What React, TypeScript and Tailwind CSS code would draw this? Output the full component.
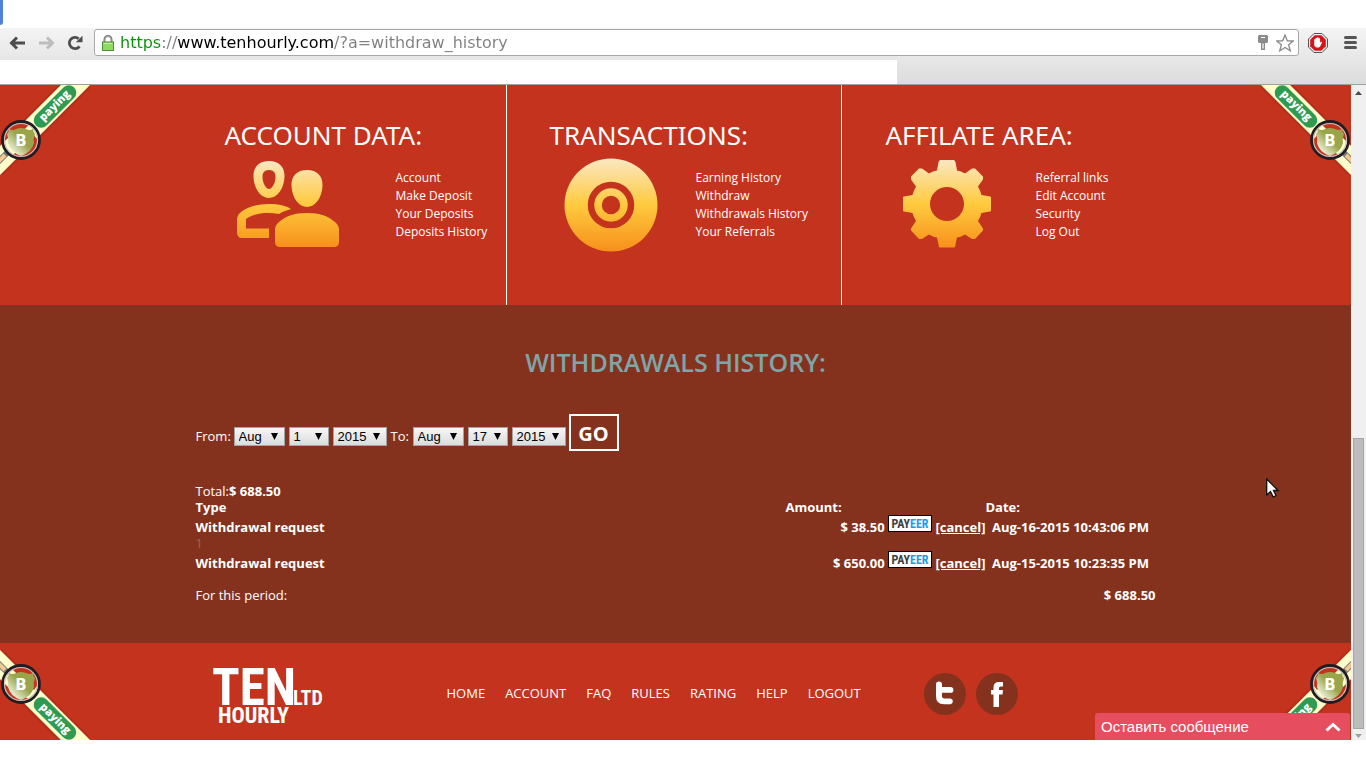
import { useState } from "react";

interface Withdrawal {
  amount: string;
  date: string;
  note?: string;
}

interface MenuColumn {
  title: string;
  links: string[];
}

const ACCOUNT: MenuColumn = {
  title: "ACCOUNT DATA:",
  links: ["Account", "Make Deposit", "Your Deposits", "Deposits History"],
};

const TRANSACTIONS: MenuColumn = {
  title: "TRANSACTIONS:",
  links: ["Earning History", "Withdraw", "Withdrawals History", "Your Referrals"],
};

const AFFILIATE: MenuColumn = {
  title: "AFFILATE AREA:",
  links: ["Referral links", "Edit Account", "Security", "Log Out"],
};

const WITHDRAWALS: Withdrawal[] = [
  { amount: "$ 38.50", date: "Aug-16-2015 10:43:06 PM", note: "1" },
  { amount: "$ 650.00", date: "Aug-15-2015 10:23:35 PM" },
];

const FOOTER_LINKS = ["HOME", "ACCOUNT", "FAQ", "RULES", "RATING", "HELP", "LOGOUT"];
const MONTHS = ["Jan", "Feb", "Mar", "Apr", "May", "Jun", "Jul", "Aug", "Sep", "Oct", "Nov", "Dec"];
const DAYS = Array.from({ length: 31 }, (_, i) => String(i + 1));
const YEARS = ["2014", "2015", "2016"];

function BrowserBar() {
  const [url, setUrl] = useState("https://www.tenhourly.com/?a=withdraw_history");

  return (
    <header className="shrink-0">
      <div className="h-7 bg-white">
        <div className="h-[25px] w-[3px] rounded-br-sm bg-[#4f83d8]" />
      </div>
      <div className="border-b border-[#a0a0a0] bg-linear-to-b from-[#f4f4f4] to-[#dcdcdc]">
        <div className="flex h-8 items-start pt-px">
          <div className="flex h-[27px] w-[94px] shrink-0 items-center gap-3 pl-[9px]">
            <button type="button" aria-label="Back" className="text-[#4d4d4d]">
              <svg width="17" height="16" viewBox="0 0 17 16" fill="none" stroke="currentColor" strokeWidth="3">
                <path d="M8 2.500 2.500 8 8 13.500M2.500 8H16" />
              </svg>
            </button>
            <button type="button" aria-label="Forward" className="text-[#bdbdbd]">
              <svg width="17" height="16" viewBox="0 0 17 16" fill="none" stroke="currentColor" strokeWidth="3">
                <path d="M9 2.500 14.500 8 9 13.500M14.500 8H1" />
              </svg>
            </button>
            <button type="button" aria-label="Reload" className="text-[#4d4d4d]">
              <svg width="16" height="16" viewBox="0 0 16 16">
                <path d="M12.500 11.300A5.600 5.600 0 1 1 11.700 3.800" fill="none" stroke="currentColor" strokeWidth="2.800" />
                <path d="M15.500.8V7.200H8.800Z" fill="currentColor" />
              </svg>
            </button>
          </div>
          <div className="flex h-[27px] grow items-center rounded-[3px] border border-[#a8a8a8] bg-white pr-1 pl-[7px]">
            <svg width="12" height="16" viewBox="0 0 12 16" className="shrink-0">
              <path d="M2.500 8V4.500a3.500 3.500 0 0 1 7 0V8" fill="none" stroke="#777" strokeWidth="2" />
              <path d="M3 8V4.500a3 3 0 0 1 6 0V8" fill="none" stroke="#ccc" strokeWidth=".7" />
              <rect x=".5" y="7" width="11" height="8.500" fill="#8edb62" stroke="#4c8f35" />
              <path d="M1.500 8.500h9" stroke="#c4f1a5" />
            </svg>
            <input
              type="text"
              aria-label="Address"
              value={url}
              onChange={(e) => setUrl(e.target.value)}
              className="ml-[6px] h-6 min-w-0 grow bg-[linear-gradient(90deg,#0a8f0a_42px,#808080_42px,#808080_57px,#000_57px,#000_214px,#808080_214px)] bg-clip-text font-['DejaVu_Sans',sans-serif] text-[16px] text-transparent outline-none"
            />
            <svg width="10" height="16" viewBox="0 0 10 16" className="mr-2 shrink-0">
              <path d="M1 0h8l1 1v6L9 8H7v7H3V8H1L0 7V1Z" fill="#8b8b8b" />
              <path d="M3 2.500h4M5 8.500v5" stroke="#fff" strokeWidth="1.200" />
            </svg>
            <button type="button" aria-label="Bookmark this page">
              <svg width="18" height="18" viewBox="0 0 18 18" className="block">
                <path
                  d="M9 1 11.300 6.800 17.300 7 12.600 10.700 14.300 16.800 9 13.400 3.700 16.800 5.400 10.700.700 7 6.700 6.800Z"
                  fill="none"
                  stroke="#8a8a8a"
                  strokeWidth="1.300"
                />
              </svg>
            </button>
          </div>
          <div className="flex h-[27px] shrink-0 items-center gap-4 pr-[9px] pl-[9px]">
            <button type="button" aria-label="Ad blocker">
              <svg width="20" height="20" viewBox="0 0 20 20" className="block">
                <path d="M6 .5h8L19.500 6v8L14 19.500H6L.5 14V6Z" fill="#eee" stroke="#555" />
                <path d="M6.700 2.200h6.600l4.500 4.500v6.600l-4.500 4.500H6.700l-4.500-4.500V6.700Z" fill="#d3151a" />
                <path
                  d="M6.200 9.700V6.500q.7-.9 1.300 0V5.300q.8-1 1.500 0v-.6q.8-1 1.600 0v.8q.8-.8 1.500 0v4.200l1-.9q1.200-.3 1 .5l-2 4.200q-.6 1-1.800 1H9q-2.800-.5-2.800-3Z"
                  fill="#fff"
                />
              </svg>
            </button>
            <button type="button" aria-label="Menu" className="flex w-[13px] flex-col gap-[2px]">
              <span className="h-[3px] rounded-sm bg-[#555]" />
              <span className="h-[3px] rounded-sm bg-[#555]" />
              <span className="h-[3px] rounded-sm bg-[#555]" />
            </button>
          </div>
        </div>
        <div className="h-6 w-[897px] max-w-full bg-white" />
      </div>
    </header>
  );
}

function CornerBadge({ right = false, bottom = false }: { right?: boolean; bottom?: boolean }) {
  const id = `badge-${right ? "r" : "l"}${bottom ? "b" : "t"}`;
  const x = (v: number) => (right ? 90 - v : v);
  const y = (v: number) => (bottom ? 90 - v : v);
  const angle = right === bottom ? -45 : 45;
  const cx = x(21);
  const cy = bottom ? 34 : 55;

  return (
    <svg width="90" height="90" viewBox="0 0 90 90" className="block">
      <defs>
        <linearGradient id={id} x1="0" y1="1" x2="1" y2="0">
          <stop offset=".15" stopColor="#f4f6e4" />
          <stop offset=".55" stopColor="#99a44b" />
        </linearGradient>
        <filter id={`${id}-shadow`} x="-10%" y="-10%" width="120%" height="120%">
          <feDropShadow dx="0" dy="0" stdDeviation="1.5" floodColor="#5a1a08" floodOpacity=".7" />
        </filter>
      </defs>
      <g transform={`translate(${right ? 90 : 0} ${bottom ? 90 : 0}) scale(${right ? -1 : 1} ${bottom ? -1 : 1})`}>
        <path d="M61 0H90L0 90V61Z" fill="#ffffcb" filter={`url(#${id}-shadow)`} />
        <rect x="28" y="14" width="54" height="15" rx="7.500" fill="#2f9b52" transform="rotate(-45 55 21.500)" />
        <path d="M8 67-2 77" stroke="#777" strokeWidth="6" />
        <path d="M5 70-4 79" stroke="#f3c98f" strokeWidth="4" />
        <path d="M33 40A19 19 0 0 0 4 52L21 55Z" fill="#c4331d" />
        <path d="M8 69A19 19 0 0 0 39 57L34 50 21 55Z" fill="#c4331d" />
        <path d="M32 37 39 45 12 71 4 64Z" fill="#ffffcb" />
      </g>
      <path
        d={`M${cx - 12} ${cy - 11}q4 2 7 0q5-2 10 0q4 2 7 0q0 3 2 5q-2 5-1 9q-2 9-13 13q-11-4-13-13q1-4-1-9q2-2 2-5Z`}
        fill={`url(#${id})`}
      />
      <circle cx={cx} cy={cy} r="18.500" fill="none" stroke="#211d24" strokeWidth="2.800" />
      <circle cx={cx} cy={cy} r="16.500" fill="none" stroke="#c8bebb" strokeWidth="1.200" />
      <text x={cx} y={cy + 6} textAnchor="middle" fill="#fff" className="font-['DejaVu_Sans',sans-serif] text-[15px] font-bold">
        B
      </text>
      <text
        x={x(55)}
        y={y(21) + 3}
        textAnchor="middle"
        fill="#fff"
        transform={`rotate(${angle} ${x(55)} ${y(21)})`}
        className="font-['Open_Sans',sans-serif] text-[11px] font-extrabold"
      >
        paying
      </text>
    </svg>
  );
}

function GoldGradient({ id, height }: { id: string; height: number }) {
  return (
    <linearGradient id={id} gradientUnits="userSpaceOnUse" x1="0" y1="0" x2="0" y2={height}>
      <stop offset="0" stopColor="#fae8c4" />
      <stop offset=".5" stopColor="#ffca3e" />
      <stop offset="1" stopColor="#f78f1b" />
    </linearGradient>
  );
}

function PeopleIcon() {
  return (
    <svg width="104" height="88" viewBox="0 0 104 88">
      <defs>
        <GoldGradient id="gold-people" height={88} />
      </defs>
      <g fill="url(#gold-people)">
        <path
          fillRule="evenodd"
          d="M33 1C43 1 49 7 48.500 17 48 29 41 38 33 38S18 29 17.500 17C17 7 23 1 33 1ZM33 10C28 10 26.500 13 26.500 17 26.500 23 30 29 33 29S39.500 23 39.500 17C39.500 13 38 10 33 10Z"
        />
        <path d="M71 10C81 10 87 16 86.500 26 86 38 79 47 71 47S56 38 55.500 26C55 16 61 10 71 10Z" />
        <path d="M33 44C43 44 50 45.500 55 49 50 50.500 46 52 43 54 30 52 19 53 10 59V68.500H33V78H6Q1 78 1 72V60Q1 55 5 52 15 44 33 44Z" />
        <path d="M71 53C84 53 92 56 99 62Q103 65 103 70V82Q103 87 98 87H44Q39 87 39 82V70Q39 65 43 62C50 56 58 53 71 53Z" />
      </g>
    </svg>
  );
}

function CoinIcon() {
  return (
    <svg width="94" height="94" viewBox="0 0 94 94">
      <defs>
        <GoldGradient id="gold-coin" height={94} />
      </defs>
      <circle cx="47" cy="47" r="46.500" fill="url(#gold-coin)" />
      <circle cx="47" cy="47" r="20" fill="none" stroke="#c4331d" strokeWidth="6.500" />
      <circle cx="47" cy="47" r="9.200" fill="#c4331d" />
    </svg>
  );
}

function GearIcon() {
  return (
    <svg width="90" height="90" viewBox="0 0 90 90">
      <defs>
        <GoldGradient id="gold-gear" height={90} />
      </defs>
      <path
        fill="url(#gold-gear)"
        fillRule="evenodd"
        d="M38 1H52L53.500 3 55 11.500Q59 12 63 14.500L70 9.500H73L81 17.500V20.500L76 27.500Q78.500 32 79.500 36L88 37.500 89 38V52L88 52.500 79.500 54Q78.500 58 76 62L81 69.500V71.500L73 80H70L63 75.500Q59 78 55 78.500L53 88 52 88.500H38L37 88 35 78.500Q31 78 27 75.500L20 80H17L9 71.500V69.500L14 62Q11.500 58 10.500 54L2 52.500 1 52V38L2 37.500 10.500 36Q11.500 32 14 27.500L9 20.500V17.500L17 9.500H20L27 14.500Q31 12 35 11.500L36.500 3ZM45 28A17 17 0 1 0 45 62 17 17 0 1 0 45 28Z"
      />
    </svg>
  );
}

function MenuLinks({ links }: { links: string[] }) {
  return (
    <ul className="pt-4 text-[12px] leading-[18px]">
      {links.map((link) => (
        <li key={link}>
          <a href="#" className="hover:underline">{link}</a>
        </li>
      ))}
    </ul>
  );
}

function AccountMenu() {
  const heading = "font-['Noto_Sans',sans-serif] text-[26px] leading-[36px] whitespace-nowrap";
  return (
    <nav className="bg-[#c4331d]">
      <div className="mx-auto flex h-[220px] w-[960px]">
        <section className="w-[311px] border-r border-white pt-8 pl-[29px]">
          <h2 className={heading}>{ACCOUNT.title}</h2>
          <div className="flex">
            <div className="w-[171px] pt-[7px] pl-[11px]"><PeopleIcon /></div>
            <MenuLinks links={ACCOUNT.links} />
          </div>
        </section>
        <section className="w-[335px] border-r border-white pt-8 pl-[43px]">
          <h2 className={heading}>{TRANSACTIONS.title}</h2>
          <div className="flex">
            <div className="w-[146px] pt-[5px] pl-[14px]"><CoinIcon /></div>
            <MenuLinks links={TRANSACTIONS.links} />
          </div>
        </section>
        <section className="grow pt-8 pl-11">
          <h2 className={heading}>{AFFILIATE.title}</h2>
          <div className="flex">
            <div className="w-[150px] pt-[6px] pl-4"><GearIcon /></div>
            <MenuLinks links={AFFILIATE.links} />
          </div>
        </section>
      </div>
    </nav>
  );
}

function DateSelect({ label, options, initial, width }: { label: string; options: string[]; initial: string; width: string }) {
  return (
    <span className={`relative block h-[19px] ${width}`}>
      <select
        aria-label={label}
        defaultValue={initial}
        className="block h-full w-full appearance-none border border-[#a3a3a3] bg-linear-to-b from-[#f6f6f6] to-[#dcdcdc] pl-1 font-['Liberation_Sans',sans-serif] text-[13px] leading-[17px] text-black"
      >
        {options.map((o) => (
          <option key={o}>{o}</option>
        ))}
      </select>
      <svg width="7" height="7" viewBox="0 0 7 7" className="pointer-events-none absolute top-[6px] right-[7px]">
        <path d="M0 0H7L3.500 7Z" fill="#000" />
      </svg>
    </span>
  );
}

function PayeerLogo() {
  return (
    <svg width="44" height="17" viewBox="0 0 44 17" className="inline align-baseline">
      <rect x=".5" y=".5" width="43" height="16" fill="#fff" stroke="#000" />
      <text
        x="22"
        y="13"
        textAnchor="middle"
        fill="#3d3f42"
        className="font-['Roboto_Condensed',Roboto,sans-serif] text-[12px] font-bold"
      >
        PAY<tspan fill="#1a9cec">EER</tspan>
      </text>
    </svg>
  );
}

function History() {
  return (
    <main className="bg-[#84321e] pb-10">
      <div className="mx-auto w-[960px] text-[13px] leading-[16px]">
        <h1 className="pt-[39px] text-center text-[25px] leading-[36px] font-semibold text-[#7fa5a9]">WITHDRAWALS HISTORY:</h1>
        <form className="flex pt-[34px]" onSubmit={(e) => e.preventDefault()}>
          <span className="w-[38px] pt-[14px]">From:</span>
          <div className="flex gap-1 pt-[13px]">
            <DateSelect label="From month" options={MONTHS} initial="Aug" width="w-[51px]" />
            <DateSelect label="From day" options={DAYS} initial="1" width="w-[40px]" />
            <DateSelect label="From year" options={YEARS} initial="2015" width="w-[54px]" />
          </div>
          <span className="w-[26px] pt-[14px] pl-1">To:</span>
          <div className="flex gap-1 pt-[13px]">
            <DateSelect label="To month" options={MONTHS} initial="Aug" width="w-[51px]" />
            <DateSelect label="To day" options={DAYS} initial="17" width="w-[40px]" />
            <DateSelect label="To year" options={YEARS} initial="2015" width="w-[54px]" />
          </div>
          <button type="submit" className="ml-[3px] h-[37px] w-[50px] border-2 border-white pt-[3px] text-[20px] leading-[30px] font-bold">
            GO
          </button>
        </form>

        <p className="pt-8">Total:<b>$ 688.50</b></p>
        <table className="w-full table-fixed border-collapse">
          <thead>
            <tr className="text-left">
              <th className="w-[590px] p-0">Type</th>
              <th className="w-[200px] p-0">Amount:</th>
              <th className="p-0">Date:</th>
            </tr>
          </thead>
          {WITHDRAWALS.map((w) => (
            <tbody key={w.date}>
              <tr className="h-5 font-bold whitespace-nowrap">
                <td className="p-0 align-bottom">Withdrawal request</td>
                <td className="p-0 text-right align-bottom">
                  {w.amount} <PayeerLogo /> <a href="#" className="underline">[cancel]</a>
                </td>
                <td className="p-0 text-center align-bottom">{w.date}</td>
              </tr>
              {w.note && (
                <tr>
                  <td colSpan={3} className="p-0 text-[#8a6a62]">{w.note}</td>
                </tr>
              )}
            </tbody>
          ))}
          <tfoot>
            <tr className="h-8">
              <td colSpan={2} className="p-0 align-bottom">For this period:</td>
              <td className="p-0 text-right align-bottom font-bold">$ 688.50</td>
            </tr>
          </tfoot>
        </table>
      </div>
    </main>
  );
}

function Footer() {
  return (
    <footer className="bg-[#c4331d]">
      <div className="mx-auto flex h-[97px] w-[960px] items-center">
        <a href="#" aria-label="Ten Hourly Ltd" className="w-[251px] shrink-0 pl-4">
          <svg
            width="120"
            height="64"
            viewBox="0 0 120 64"
            fill="#fff"
            className="block font-['Roboto_Condensed',Roboto,sans-serif] font-bold"
          >
            <text x="0" y="45" fontSize="51">TEN</text>
            <text x="81" y="45" fontSize="20">LTD</text>
            <text x="6" y="63" fontSize="22">HOURLY</text>
          </svg>
        </a>
        <nav className="flex w-[477px] shrink-0 gap-5 pt-[2px] text-[13px] leading-[18px]">
          {FOOTER_LINKS.map((link) => (
            <a key={link} href="#">{link}</a>
          ))}
        </nav>
        <div className="flex gap-[10px] pt-[5px]">
          <a href="#" aria-label="Twitter" className="size-[42px] rounded-full bg-[#84321e]">
            <svg width="42" height="42" viewBox="0 0 42 42">
              <path d="M12 11.500a3 3 0 0 1 6 0V14h8.500a2.800 2.800 0 0 1 0 5.800H18V23q0 2.500 2.500 2.500h6a2.900 2.900 0 0 1 0 5.700H20q-8 0-8-8Z" fill="#fff" />
            </svg>
          </a>
          <a href="#" aria-label="Facebook" className="size-[42px] rounded-full bg-[#84321e]">
            <svg width="42" height="42" viewBox="0 0 42 42">
              <path d="M17.500 34V21.500H15V17h2.500v-2.500Q17.500 9 23 9h4v4.500h-2.500q-1.500 0-1.500 1.500V17h4l-.5 4.500H23V34Z" fill="#fff" />
            </svg>
          </a>
        </div>
      </div>
    </footer>
  );
}

function ScrollBar() {
  return (
    <div className="flex w-[15px] shrink-0 flex-col items-center bg-[#f0f0f0]">
      <svg width="7" height="4" viewBox="0 0 7 4" className="mt-[6px]">
        <path d="M3.500 0 7 4H0Z" fill="#4a4a4a" />
      </svg>
      <div className="grow" />
      <div className="h-[291px] w-[11px] border border-[#a6a6a6] bg-[#bcbcbc]" />
      <svg width="7" height="4" viewBox="0 0 7 4" className="mt-[5px] mb-[2px]">
        <path d="M0 0H7L3.500 4Z" fill="#a0a0a0" />
      </svg>
    </div>
  );
}

export default function App() {
  return (
    <div className="relative flex min-h-screen flex-col bg-white font-['Open_Sans',sans-serif] text-white">
      <BrowserBar />
      <div className="flex">
        <div className="relative min-w-0 grow overflow-hidden">
          <AccountMenu />
          <History />
          <Footer />
          <div className="absolute top-0 left-0"><CornerBadge /></div>
          <div className="absolute top-0 right-0"><CornerBadge right /></div>
          <div className="absolute bottom-0 left-0"><CornerBadge bottom /></div>
          <div className="absolute right-0 bottom-0"><CornerBadge right bottom /></div>
          <button
            type="button"
            className="absolute right-px bottom-0 flex h-[27px] w-[255px] items-center justify-between rounded-t-[3px] bg-[#e64e5f] pt-px pr-[9px] pl-[6px] font-['Liberation_Sans',sans-serif] text-[15px]"
          >
            Оставить сообщение
            <svg width="16" height="10" viewBox="0 0 16 10" fill="none" stroke="#fff" strokeWidth="3">
              <path d="M1.500 8.500 8 2.500 14.500 8.500" />
            </svg>
          </button>
          <svg width="13" height="20" viewBox="0 0 13 20" className="pointer-events-none absolute top-[393px] right-[72px]">
            <path d="M.7 1V17L4.500 13.500 7.300 19 10 17.500 7.500 12.500H12Z" fill="#fff" stroke="#111" strokeWidth="1.300" />
          </svg>
        </div>
        <ScrollBar />
      </div>
    </div>
  );
}
